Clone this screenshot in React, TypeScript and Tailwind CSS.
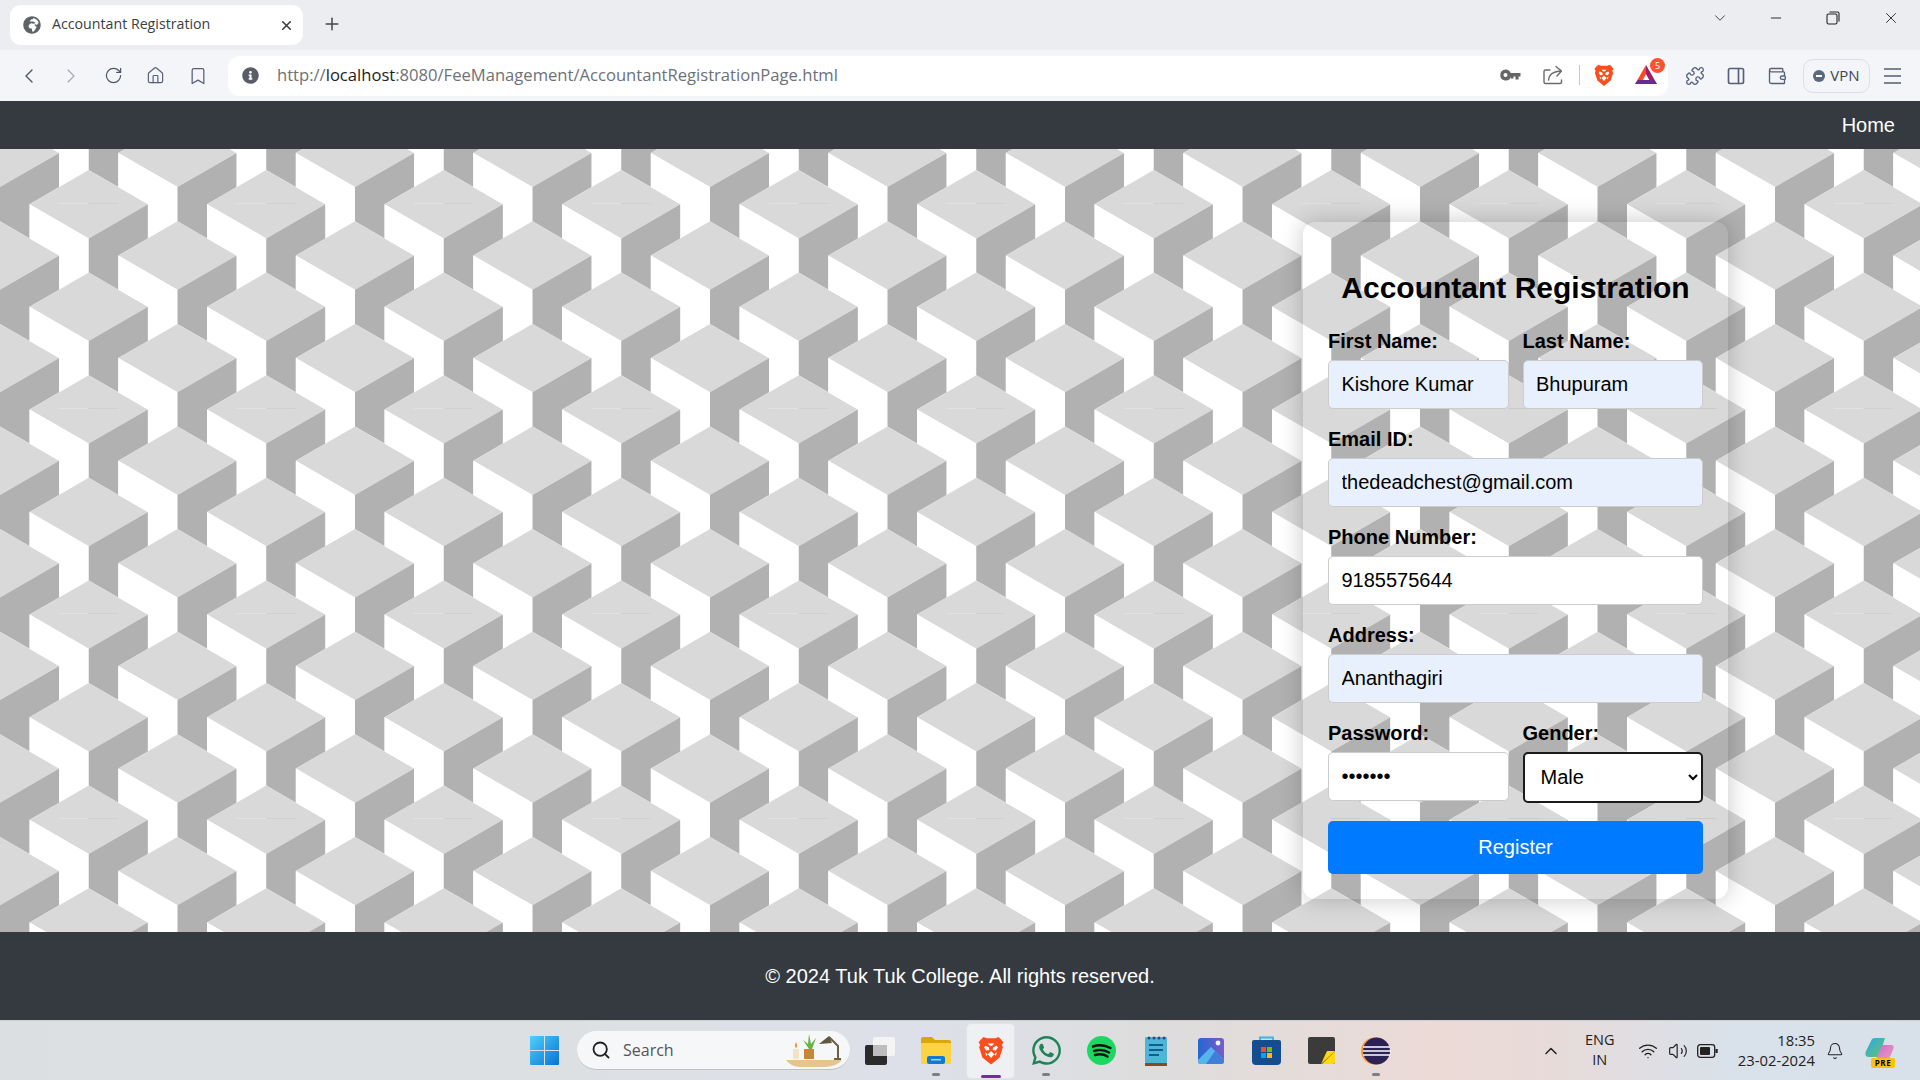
import React from "react";
import {
  ChevronLeft, ChevronRight, RotateCw, Home, Bookmark, X, Plus, ChevronDown, Minus, PanelRight, Wallet,
  Search, ChevronUp, Wifi, Volume2, Bell, Puzzle,
} from "lucide-react";
import { FaGlobeAfrica, FaInfoCircle, FaWhatsapp } from "react-icons/fa";

const U = 177.5 / 6;
const V = 102.6 / 6;

function Pattern() {
  const items: React.ReactNode[] = [];
  for (let i = -1; i < 23; i++) {
    for (let j = -2; j < 9; j++) {
      const cx = 88.75 + i * 88.75;
      const ty = (((i % 2) + 2) % 2 === 0 ? 21 : 72.3) + j * 102.6;
      const d = `${cx},${ty} ${cx + 2 * U},${ty + 2 * V} ${cx},${ty + 4 * V} ${cx - 2 * U},${ty + 2 * V}`;
      const w = `${cx - 2 * U},${ty + 2 * V} ${cx},${ty + 4 * V} ${cx},${ty + 6 * V} ${cx - U},${ty + 7 * V} ${cx - U},${ty + 5 * V} ${cx - 2 * U},${ty + 4 * V}`;
      const g = `${cx},${ty + 4 * V} ${cx + 2 * U},${ty + 2 * V} ${cx + 2 * U},${ty + 4 * V} ${cx + U},${ty + 5 * V} ${cx + U},${ty + 7 * V} ${cx},${ty + 6 * V}`;
      items.push(
        <g key={`${i}_${j}`}>
          <polygon points={d} fill="#d9d9d9" />
          <polygon points={w} fill="#ffffff" />
          <polygon points={g} fill="#b1b1b1" />
        </g>
      );
    }
  }
  const seams: React.ReactNode[] = [];
  for (let i = 0; i < 11; i++) {
    for (const y of [54.5, 259.5, 464.5, 669.5]) {
      const x = 59 + i * 177.5;
      seams.push(<line key={`a${i}_${y}`} x1={x} x2={x + 29.5} y1={y} y2={y} stroke="#e2e2e2" strokeWidth="1" />);
      seams.push(<line key={`b${i}_${y}`} x1={x + 29.5} x2={x + 59} y1={y} y2={y} stroke="#d0d0d0" strokeWidth="1" />);
    }
  }
  return (
    <svg className="absolute inset-0 w-full h-full" width="1920" height="783">
      <rect width="1920" height="783" fill="#ffffff" />
      {items}
      {seams}
      <line x1="1303" x2="1716" y1="259.5" y2="259.5" stroke="rgba(0,0,0,0.03)" />
      <line x1="1303" x2="1716" y1="669.5" y2="669.5" stroke="rgba(0,0,0,0.03)" />
    </svg>
  );
}

function BraveLion({ size = 24 }: { size?: number }) {
  return (
    <svg width={size} height={size * 1.12} viewBox="0 0 24 27">
      <path d="M5 1 L8 2.2 H16 L19 1 L22 4 L23.5 6 L22 8 L23 10.5 L20 20 L12 26.5 L4 20 L1 10.5 L2 8 L.5 6 L2 4 Z" fill="#fb4e1e" />
      <path d="M7 9 L10 10.5 L10.5 13 L7.5 13.5 L5.5 10.5 Z M17 9 L14 10.5 L13.5 13 L16.5 13.5 L18.5 10.5 Z" fill="#ffffff" />
      <path d="M9 7 H15 L13 9 H11 Z M12 14 L9 17 L12 20.5 L15 17 Z M6.5 15 L9 17 L7.5 18.5 Z M17.5 15 L15 17 L16.5 18.5 Z" fill="#ffffff" />
    </svg>
  );
}

function Bat() {
  return (
    <div className="relative w-[24px] h-[22px]">
      <svg width="24" height="22" viewBox="0 0 24 22" className="block">
        <path d="M12 1 L1 20 H6.5 L12 10 Z" fill="#ff4724" />
        <path d="M12 1 L23 20 H17.5 L12 10 Z" fill="#9e1f63" />
        <path d="M1 20 H23 L20 16 H4 Z" fill="#662d91" />
      </svg>
      <div className="absolute -top-[6px] -right-[7px] w-[15px] h-[15px] rounded-full bg-[#fb5231] text-white text-[9px] leading-[15px] text-center" style={{ fontFamily: '"Open Sans", sans-serif' }}>
        5
      </div>
    </div>
  );
}

function Slot({ w, children }: { w: string; children: React.ReactNode }) {
  return <div className={`flex items-center justify-center shrink-0 ${w}`}>{children}</div>;
}

function TabStrip() {
  return (
    <div className="h-[50px] bg-[#ecedf1] flex items-start pl-[10px] shrink-0">
      <div className="mt-[5px] w-[293px] h-[40px] bg-white rounded-[11px] flex items-center pl-[13px] pr-[9px] shrink-0">
        <FaGlobeAfrica size={18} className="text-[#5f6368]" />
        <span className="ml-[11px] -mt-[2px] text-[14.2px] text-[#3c4043] whitespace-nowrap">Accountant Registration</span>
        <X size={15} strokeWidth={2.6} className="ml-auto text-[#3c4043]" />
      </div>
      <div className="ml-[19px] mt-[14px]">
        <Plus size={20} strokeWidth={1.8} className="text-[#444]" />
      </div>
      <div className="ml-auto flex items-center h-[36px]">
        <ChevronDown size={18} strokeWidth={1.2} className="text-[#333] mr-[39px]" />
        <Minus size={16} strokeWidth={1.4} className="text-[#222] mr-[42px]" />
        <svg width="14" height="14" viewBox="0 0 14 14" className="mr-[42px]" fill="none" stroke="#222" strokeWidth="1.1">
          <rect x="1" y="3" width="10" height="10" rx="1.5" />
          <path d="M3.5 1 H11.5 Q13 1 13 2.5 V10.5" />
        </svg>
        <X size={18} strokeWidth={1.2} className="text-[#222] mr-[20px]" />
      </div>
    </div>
  );
}

function Toolbar() {
  return (
    <div className="h-[51px] bg-[#f4f5f8] flex items-center pl-[8px] shrink-0">
      <Slot w="w-[42px]"><ChevronLeft size={24} strokeWidth={1.4} className="text-[#4d5561]" /></Slot>
      <Slot w="w-[42px]"><ChevronRight size={24} strokeWidth={1.2} className="text-[#a4a9b3]" /></Slot>
      <Slot w="w-[42px]"><RotateCw size={19} strokeWidth={1.5} className="text-[#4d5561]" /></Slot>
      <Slot w="w-[43px]"><Home size={19} strokeWidth={1.5} className="text-[#56607a]" /></Slot>
      <Slot w="w-[42px]"><Bookmark size={20} strokeWidth={1.5} className="text-[#56607a]" /></Slot>
      <div className="ml-[9px] w-[1440px] h-[40px] bg-white rounded-[12px] flex items-center pl-[14px] shrink-0">
        <FaInfoCircle size={17} className="text-[#5b5d66]" />
        <span className="ml-[18px] text-[16.6px] text-[#6d7178] whitespace-nowrap">
          http://<span className="text-[#1c1e22]">localhost</span>:8080/FeeManagement/AccountantRegistrationPage.html
        </span>
        <div className="ml-auto flex items-center pr-[10px]">
          <svg width="21" height="12" viewBox="0 0 21 12" className="mr-[22px]">
            <path fillRule="evenodd" d="M5.5 0.5 A5.5 5.5 0 0 1 10.7 4 H20.5 V7.5 H18.5 V10.5 H15.5 V7.5 H13.5 V9.5 H11 V7.8 A5.5 5.5 0 1 1 5.5 0.5 Z M5.5 4 A2 2 0 1 0 5.5 8 A2 2 0 1 0 5.5 4 Z" fill="#666" />
          </svg>
          <svg width="20" height="20" viewBox="0 0 20 20" fill="none" stroke="#6b6b6b" strokeWidth="1.4" strokeLinecap="round" strokeLinejoin="round" className="mr-[16px]">
            <path d="M7 5 H2.5 Q1 5 1 6.5 V17 Q1 18.5 2.5 18.5 H17 Q18.5 18.5 18.5 17 V15" />
            <path d="M5.5 15 Q6 7 17 6 M13 1.5 L18.5 6 L14 11" />
          </svg>
          <div className="w-px h-[20px] bg-[#c6c8cd] mr-[14px]" />
          <BraveLion size={20} />
          <div className="ml-[20px] mr-[0px]"><Bat /></div>
        </div>
      </div>
      <Slot w="w-[54px]"><Puzzle size={20} strokeWidth={1.6} className="text-[#56607a]" /></Slot>
      <Slot w="w-[28px]"><PanelRight size={20} strokeWidth={2} className="text-[#56607a]" /></Slot>
      <Slot w="w-[53px]"><Wallet size={20} strokeWidth={1.6} className="text-[#56607a]" /></Slot>
      <div className="w-[67px] h-[34px] rounded-[10px] border border-[#dcdfe5] flex items-center justify-center gap-[5px] shrink-0">
        <span className="w-[12px] h-[12px] rounded-full bg-[#5e6780] flex items-center justify-center">
          <span className="w-[6px] h-[2px] bg-white" />
        </span>
        <span className="text-[15px] text-[#3c4452]">VPN</span>
      </div>
      <div className="ml-[14px] flex flex-col gap-[5px]">
        <span className="w-[17px] h-[2px] bg-[#7a8294]" />
        <span className="w-[17px] h-[2px] bg-[#7a8294]" />
        <span className="w-[17px] h-[2px] bg-[#7a8294]" />
      </div>
    </div>
  );
}

const inputCls =
  "block w-full h-[49px] border border-[#cccccc] rounded-[5px] pl-[12.5px] text-[20px] text-black outline-none";

function Field({ label, value, bg, type = "text", className = "" }: { label: string; value: string; bg: string; type?: string; className?: string }) {
  return (
    <div className={`flex flex-col ${className}`}>
      <label className="h-[31px] leading-[25px] text-[20px] font-bold text-black">{label}</label>
      <input readOnly type={type} value={value} className={`${inputCls} ${bg}`} />
    </div>
  );
}

function Card() {
  return (
    <div className="relative w-[425px] h-[677px] rounded-[12px] shadow-[0_0_25px_rgba(0,0,0,0.22)] px-[25px] pt-[49px]">
      <h2 className="text-[30px] leading-[34px] font-bold text-black text-center">Accountant Registration</h2>
      <div className="mt-[24px] flex gap-[14px]">
        <Field className="flex-1" label="First Name:" value="Kishore Kumar" bg="bg-[#e8f0fe]" />
        <Field className="flex-1" label="Last Name:" value="Bhupuram" bg="bg-[#e8f0fe]" />
      </div>
      <Field className="mt-[18px]" label="Email ID:" value="thedeadchest@gmail.com" bg="bg-[#e8f0fe]" />
      <Field className="mt-[18px]" label="Phone Number:" value="9185575644" bg="bg-white" />
      <Field className="mt-[18px]" label="Address:" value="Ananthagiri" bg="bg-[#e8f0fe]" />
      <div className="mt-[18px] flex gap-[14px]">
        <Field className="flex-1" label="Password:" value="1234567" type="password" bg="bg-white" />
        <div className="flex-1 flex flex-col">
          <label className="h-[31px] leading-[25px] text-[20px] font-bold text-black">Gender:</label>
          <select className="block w-full h-[51px] border-[2.5px] border-[#1a1a1a] rounded-[5px] bg-white pl-[12px] pb-[2px] text-[20px] text-black outline-none" defaultValue="Male">
            <option>Male</option>
            <option>Female</option>
          </select>
        </div>
      </div>
      <button className="mt-[18px] block w-full h-[53px] rounded-[5px] bg-[#007bff] text-white text-[20px] pb-[2px]">Register</button>
    </div>
  );
}

function TaskIcon({ w = "w-[55px]", dot, children }: { w?: string; dot?: boolean; children: React.ReactNode }) {
  return (
    <div className={`relative flex items-center justify-center h-[60px] shrink-0 ${w}`}>
      {children}
      {dot && <span className="absolute bottom-[5px] w-[8px] h-[3px] rounded-full bg-[#7b7f85]" />}
    </div>
  );
}

function Taskbar() {
  return (
    <div
      className="h-[60px] shrink-0 border-t border-[#cfcfd2] flex items-center bg-[linear-gradient(90deg,#dcdfe1_0%,#dde0e3_30%,#dde0e9_48%,#dddddd_60%,#ecdad6_75%,#e8dad8_80%,#d9e1ea_90%,#d8e0ea_100%)]"
      style={{ fontFamily: '"Open Sans", sans-serif' }}
    >
      <div className="ml-[530px]">
        <svg width="29" height="29" viewBox="0 0 29 29" className="block">
          <defs>
            <linearGradient id="win" x1="0" y1="0" x2="1" y2="1">
              <stop offset="0" stopColor="#4fd0fb" />
              <stop offset="1" stopColor="#0673d4" />
            </linearGradient>
          </defs>
          <path d="M0 1 Q0 0 1 0 H14 V14 H0 Z M15 0 H28 Q29 0 29 1 V14 H15 Z M0 15 H14 V29 H1 Q0 29 0 28 Z M15 15 H29 V28 Q29 29 28 29 H15 Z" fill="url(#win)" />
        </svg>
      </div>
      <div className="ml-[18px] w-[273px] h-[39px] rounded-full bg-[#f6f7f8] border-b border-[#bfc1c4] flex items-center pl-[14px] shrink-0">
        <Search size={20} strokeWidth={2.2} className="text-[#222]" />
        <span className="ml-[12px] text-[16px] text-[#555]">Search</span>
        <svg width="58" height="36" viewBox="0 0 58 36" className="ml-auto mr-[6px]">
          <path d="M0 28 H56 Q50 35 38 35 H14 Q5 35 0 28 Z" fill="#e7c48f" />
          <rect x="7" y="17" width="6" height="10" rx="1" fill="#f0e3c6" />
          <path d="M10 10 Q12 14 10 16 Q8 14 10 10 Z" fill="#f08a1d" />
          <rect x="18" y="17" width="10" height="10" fill="#c98635" />
          <path d="M23 17 L17 8 L22 12 L23 2 L25 12 L30 6 L26 17 Z" fill="#65b347" />
          <path d="M52 27 V14 L43 5 M48 27 H55" stroke="#6b604a" strokeWidth="2" fill="none" />
          <path d="M33 12 L43 4 L46 11 Z" fill="#5f5640" />
        </svg>
      </div>
      <div className="ml-[2px] flex items-center">
        <TaskIcon>
          <div className="relative w-[30px] h-[28px]">
            <div className="absolute left-[8px] top-0 w-[22px] h-[19px] rounded-[2px] bg-[#f4f4f4]" />
            <div className="absolute left-0 top-[8px] w-[22px] h-[20px] rounded-[2px] bg-[#2b2b2b]" />
            <div className="absolute left-[8px] top-[8px] w-[14px] h-[11px] bg-[#bdbdbd]" />
          </div>
        </TaskIcon>
        <div className="ml-[1px]">
          <TaskIcon dot>
            <svg width="30" height="27" viewBox="0 0 30 27">
              <path d="M0 2 Q0 0 2 0 H11 L14 3 H28 Q30 3 30 5 V8 H0 Z" fill="#dba50c" />
              <rect y="6" width="30" height="21" rx="1" fill="#fbd343" />
              <rect x="6" y="19" width="18" height="8" rx="2" fill="#0f7ad6" />
              <rect x="10" y="22" width="10" height="1.5" fill="#9fd3f5" />
            </svg>
          </TaskIcon>
        </div>
        <div className="relative flex items-center justify-center w-[49px] h-[56px] rounded-[5px] bg-[#eef0f3] border border-[#e2e3e6] ml-[3px] mr-[3.5px] shrink-0">
          <BraveLion size={26} />
          <span className="absolute bottom-0 w-[20px] h-[3px] rounded-full bg-[#8b1fa9]" />
        </div>
        <TaskIcon dot>
          <FaWhatsapp size={33} className="text-[#1c8457]" />
        </TaskIcon>
        <TaskIcon>
          <svg width="29" height="29" viewBox="0 0 29 29">
            <circle cx="14.5" cy="14.5" r="14.5" fill="#1ed760" />
            <path d="M6 10.5 Q15 7.5 23.5 12 M7 15 Q15 12.5 22 16.5 M8 19 Q15 17 20.5 20.5" stroke="#111" strokeWidth="2.4" strokeLinecap="round" fill="none" />
          </svg>
        </TaskIcon>
        <TaskIcon>
          <svg width="22" height="30" viewBox="0 0 22 30">
            <rect y="1" width="22" height="26" rx="1" fill="#4fb5d8" />
            <rect y="27" width="22" height="3" fill="#8a4a1c" />
            <path d="M4 9 H18 M4 14 H18 M4 19 H14" stroke="#0f5f8a" strokeWidth="1.8" />
            <circle cx="4" cy="2" r="1.5" fill="#0c5878" />
            <circle cx="9" cy="2" r="1.5" fill="#0c5878" />
            <circle cx="14" cy="2" r="1.5" fill="#0c5878" />
            <circle cx="19" cy="2" r="1.5" fill="#0c5878" />
          </svg>
        </TaskIcon>
        <TaskIcon>
          <svg width="26" height="26" viewBox="0 0 26 26">
            <defs>
              <linearGradient id="ph" x1="0" y1="0" x2="1" y2="0">
                <stop offset="0" stopColor="#2468d0" />
                <stop offset="1" stopColor="#7a5bc8" />
              </linearGradient>
            </defs>
            <rect width="26" height="26" rx="3" fill="url(#ph)" />
            <path d="M0 22 L13 9 L26 22 V23 Q26 26 23 26 H3 Q0 26 0 23 Z" fill="#57b5ee" />
            <path d="M8 26 L17 13 L26 22 V23 Q26 26 23 26 Z" fill="#3f7fd8" />
            <circle cx="20" cy="5" r="2.4" fill="#f4f4ff" />
          </svg>
        </TaskIcon>
        <TaskIcon>
          <svg width="29" height="29" viewBox="0 0 29 29">
            <path d="M8 5 V1.5 H21 V5" stroke="#35b4ef" strokeWidth="1.8" fill="none" />
            <path d="M0 6 Q0 4 2 4 H27 Q29 4 29 6 V25 Q29 29 25 29 H4 Q0 29 0 25 Z" fill="#154d91" />
            <rect x="9" y="11" width="5" height="5" fill="#f25022" />
            <rect x="15" y="11" width="5" height="5" fill="#7fba00" />
            <rect x="9" y="17" width="5" height="5" fill="#00a4ef" />
            <rect x="15" y="17" width="5" height="5" fill="#ffb900" />
          </svg>
        </TaskIcon>
        <TaskIcon>
          <svg width="27" height="27" viewBox="0 0 27 27">
            <rect width="27" height="27" rx="2" fill="#3b3b3b" />
            <path d="M27 14 V25 Q27 27 25 27 H14 Z" fill="#ffd90f" />
            <path d="M13 27 L19 14 H27 Z" fill="#ffd90f" />
          </svg>
        </TaskIcon>
        <TaskIcon dot>
          <svg width="30" height="28" viewBox="0 0 30 28">
            <circle cx="13.5" cy="14" r="13.5" fill="#f09a36" />
            <circle cx="15.5" cy="14" r="13.5" fill="#2c2255" />
            <path d="M2 10 H29 M2 14 H30 M2 18 H29" stroke="#ffffff" strokeWidth="1.6" />
          </svg>
        </TaskIcon>
      </div>
      <div className="ml-auto flex items-center text-[#222]">
        <ChevronUp size={20} strokeWidth={1.8} className="mr-[21px]" />
        <div className="w-[36px] flex flex-col items-center text-[14.5px] leading-[20px] mr-[20px] -mt-[2px]">
          <span>ENG</span>
          <span>IN</span>
        </div>
        <Wifi size={20} strokeWidth={1.6} className="mr-[10px]" />
        <Volume2 size={20} strokeWidth={1.4} className="mr-[9px]" />
        <svg width="21" height="14" viewBox="0 0 21 14" className="mr-[20px]">
          <rect x=".7" y=".7" width="17" height="12.6" rx="2.5" fill="none" stroke="#222" strokeWidth="1.3" />
          <rect x="3" y="3" width="10" height="8" rx="1" fill="#222" />
          <rect x="18.5" y="5" width="2.2" height="4" fill="#222" />
        </svg>
        <div className="flex flex-col items-end text-[14.8px] leading-[20px] mr-[11px] -mt-[2px]">
          <span>18:35</span>
          <span>23-02-2024</span>
        </div>
        <Bell size={18} strokeWidth={1.4} className="mr-[21px]" />
        <div className="relative w-[30px] h-[28px] mr-[25px]">
          <svg width="30" height="24" viewBox="0 0 30 24" className="block">
            <defs>
              <linearGradient id="cp1" x1="0" y1="0" x2="1" y2="1">
                <stop offset="0" stopColor="#28a8ea" />
                <stop offset="1" stopColor="#6ac46b" />
              </linearGradient>
              <linearGradient id="cp2" x1="0" y1="0" x2="1" y2="1">
                <stop offset="0" stopColor="#c26fd6" />
                <stop offset="1" stopColor="#f59ab2" />
              </linearGradient>
            </defs>
            <path d="M10 1 H20 L14 20 H4 Q-1 20 1 14 L6 4 Q7 1 10 1 Z" fill="url(#cp1)" />
            <path d="M17 8 H26 Q30 8 28 13 L25 20 Q24 23 21 23 H11 Z" fill="url(#cp2)" />
          </svg>
          <span className="absolute -bottom-[3px] right-0 w-[24px] h-[10px] rounded-[2px] bg-[#fdc20f] text-[8px] leading-[10px] font-bold text-center text-black tracking-[0.5px]">PRE</span>
        </div>
      </div>
    </div>
  );
}

export default function App() {
  return (
    <div className="w-[1920px] h-[1080px] overflow-hidden flex flex-col" style={{ fontFamily: '"Open Sans", sans-serif' }}>
      <TabStrip />
      <Toolbar />
      <div className="flex-1 flex flex-col" style={{ fontFamily: '"Liberation Sans", Arial, sans-serif' }}>
        <nav className="h-[48px] bg-[#343a40] flex items-center justify-end pr-[25px] shrink-0">
          <a className="text-white text-[20px]">Home</a>
        </nav>
        <main className="relative h-[783px] flex justify-end pt-[73px] pr-[192px] overflow-hidden shrink-0">
          <Pattern />
          <Card />
        </main>
        <footer className="h-[88px] bg-[#343a40] flex items-center justify-center text-white text-[20px] shrink-0">
          © 2024 Tuk Tuk College. All rights reserved.
        </footer>
      </div>
      <Taskbar />
    </div>
  );
}
